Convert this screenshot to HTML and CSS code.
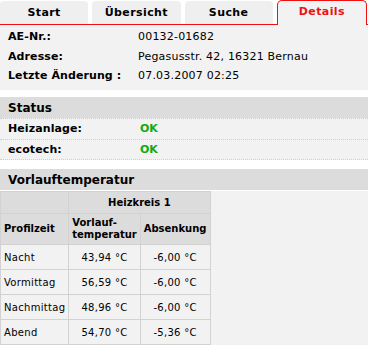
FILE: index.html
```html
<!DOCTYPE html>
<html lang="de">
<head>
<meta charset="utf-8">
<link rel="stylesheet" href="styles.css">
</head>
<body>
<nav class="tabs">
  <div class="tab">Start</div>
  <div class="tab">Übersicht</div>
  <div class="tab">Suche</div>
  <div class="tab active">Details</div>
</nav>
<section class="info">
  <div class="row"><span class="label">AE-Nr.:</span><span class="value">00132-01682</span></div>
  <div class="row"><span class="label">Adresse:</span><span class="value">Pegasusstr. 42, 16321 Bernau</span></div>
  <div class="row"><span class="label">Letzte Änderung :</span><span class="value">07.03.2007 02:25</span></div>
</section>
<h2 class="head">Status</h2>
<div class="status">
  <div class="srow"><span class="label">Heizanlage:</span><span class="ok">OK</span></div>
  <div class="srow"><span class="label">ecotech:</span><span class="ok">OK</span></div>
</div>
<h2 class="head">Vorlauftemperatur</h2>
<div class="panel">
  <table class="temps">
    <thead>
      <tr><th class="blank"></th><th colspan="2">Heizkreis 1</th></tr>
      <tr><th class="left">Profilzeit</th><th class="left">Vorlauf-<br>temperatur</th><th>Absenkung</th></tr>
    </thead>
    <tbody>
      <tr><td class="left">Nacht</td><td>43,94 °C</td><td>-6,00 °C</td></tr>
      <tr><td class="left">Vormittag</td><td>56,59 °C</td><td>-6,00 °C</td></tr>
      <tr><td class="left">Nachmittag</td><td>48,96 °C</td><td>-6,00 °C</td></tr>
      <tr><td class="left">Abend</td><td>54,70 °C</td><td>-5,36 °C</td></tr>
    </tbody>
  </table>
</div>
</body>
</html>
```

FILE: styles.css
```css
* { box-sizing: border-box; }
html, body { margin: 0; padding: 0; background: #fff; }
body {
  font-family: "DejaVu Sans", Verdana, sans-serif;
  font-size: 11px;
  color: #000;
  width: 368px;
  height: 345px;
  overflow: hidden;
}
.tabs {
  display: flex;
  gap: 4px;
  padding: 1px 1px 0 0;
  border-bottom: 1px solid #f01010;
  height: 25px;
  align-items: flex-end;
}
.tab {
  flex: 1;
  height: 23px;
  background: #efefef;
  border-radius: 4px 4px 0 0;
  font-weight: bold;
  font-size: 11px;
  letter-spacing: 0.4px;
  text-align: center;
  line-height: 24px;
}
.tab.active {
  color: #ee1111;
  background: #f2f2f2;
  border: 1px solid #f01010;
  border-bottom: none;
  height: 25px;
  margin-bottom: -1px;
  line-height: 22px;
  border-radius: 5px 5px 0 0;
}
.info {
  background: #f2f2f2;
  padding: 2px 8px 6px 8px;
  height: 65px;
}
.row {
  display: flex;
  height: 19.5px;
  line-height: 19px;
}
.label {
  font-weight: bold;
  width: 130px;
  letter-spacing: 0.1px;
}
.value { letter-spacing: 0.2px; }
.head {
  margin: 7px 0 0 0;
  background: #dcdcdc;
  font-size: 12px;
  font-weight: bold;
  height: 21px;
  line-height: 22px;
  padding-left: 8px;
}
.status { background: #fff; }
.srow {
  display: flex;
  background: #f2f2f2;
  height: 21px;
  line-height: 20px;
  padding-left: 8px;
  border-top: 1px dotted #d0d0d0;
}
.srow:last-child { border-bottom: 1px dotted #d0d0d0; }
.ok {
  color: #11aa11;
  font-weight: bold;
  margin-left: 2px;
}
.status + .head { margin-top: 9px; }
.panel {
  background: #f2f2f2;
  height: 160px;
  border-top: 1px solid #fff;
}
.temps {
  border-collapse: collapse;
  font-size: 10px;
  width: 207px;
}
.temps th, .temps td {
  border: 1px solid #d2d2d2;
  padding: 0 3px;
}
.temps th {
  background: #dcdcdc;
  font-weight: bold;
  text-align: center;
}
.temps thead tr:first-child th { height: 22px; }
.temps thead tr:nth-child(2) th { height: 31px; line-height: 12px; }
.temps th.blank { width: 66px; border-bottom: none; }
.temps td {
  height: 25px;
  text-align: center;
  background: #f2f2f2;
  letter-spacing: 0.3px;
}
.temps .left { text-align: left; }
```
